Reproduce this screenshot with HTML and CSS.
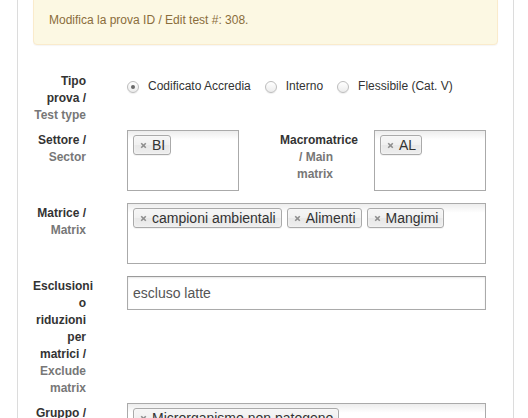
FILE: index.html
```html
<!DOCTYPE html>
<html lang="it">
<head>
<meta charset="utf-8">
<title>Modifica prova</title>
<link rel="stylesheet" href="styles.css">
</head>
<body>
<div class="panel">
  <div class="alert">Modifica la prova ID / Edit test #: 308.</div>

  <div class="form-group">
    <div class="label">Tipo prova / <span class="en">Test type</span></div>
    <div class="radios span-all">
      <label class="radio-opt"><span class="radio checked"></span>Codificato Accredia</label>
      <label class="radio-opt"><span class="radio"></span>Interno</label>
      <label class="radio-opt"><span class="radio"></span>Flessibile (Cat. V)</label>
    </div>
  </div>

  <div class="form-group">
    <div class="label">Settore / <span class="en">Sector</span></div>
    <div class="choices">
      <span class="tag"><svg viewBox="0 0 7 7"><path d="M1.2 1.2L5.8 5.8M5.8 1.2L1.2 5.8"/></svg>BI</span>
    </div>
    <div class="label">Macromatrice <span class="en">/ Main matrix</span></div>
    <div class="choices">
      <span class="tag"><svg viewBox="0 0 7 7"><path d="M1.2 1.2L5.8 5.8M5.8 1.2L1.2 5.8"/></svg>AL</span>
    </div>
  </div>

  <div class="form-group">
    <div class="label">Matrice / <span class="en">Matrix</span></div>
    <div class="choices span-all">
      <span class="tag"><svg viewBox="0 0 7 7"><path d="M1.2 1.2L5.8 5.8M5.8 1.2L1.2 5.8"/></svg>campioni ambientali</span>
      <span class="tag"><svg viewBox="0 0 7 7"><path d="M1.2 1.2L5.8 5.8M5.8 1.2L1.2 5.8"/></svg>Alimenti</span>
      <span class="tag"><svg viewBox="0 0 7 7"><path d="M1.2 1.2L5.8 5.8M5.8 1.2L1.2 5.8"/></svg>Mangimi</span>
    </div>
  </div>

  <div class="form-group">
    <div class="label">Esclusioni o riduzioni per matrici / <span class="en">Exclude matrix</span></div>
    <input class="input span-all" type="text" value="escluso latte">
  </div>

  <div class="form-group">
    <div class="label">Gruppo / <span class="en">Group</span></div>
    <div class="choices span-all">
      <span class="tag"><svg viewBox="0 0 7 7"><path d="M1.2 1.2L5.8 5.8M5.8 1.2L1.2 5.8"/></svg>Microrganismo non patogeno</span>
    </div>
  </div>
</div>
</body>
</html>
```

FILE: styles.css
```css
html, body {
  margin: 0;
  padding: 0;
  background: #fff;
}

body {
  font-family: "Liberation Sans", Arial, sans-serif;
  font-size: 12px;
  line-height: 17px;
  color: #333;
  overflow: hidden;
}

.panel {
  margin-left: 17px;
  width: 465px;
  padding: 0 15px;
  min-height: 440px;
  border-left: 1px solid #dcdcdc;
  border-right: 1px solid #dcdcdc;
}

.alert {
  margin: -4px 0 26px;
  padding: 15px;
  border: 1px solid #faebcc;
  border-radius: 4px;
  background: #fcf8e3;
  color: #8a6d3b;
  box-shadow: 0 1px 1px rgba(0, 0, 0, 0.04);
}

.form-group {
  display: grid;
  grid-template-columns: 53px 112px 53px 112px;
  column-gap: 41px;
  align-items: start;
  margin-bottom: 6px;
}

.label {
  font-weight: bold;
  text-align: right;
  padding-top: 2px;
}

.label .en {
  color: #777;
}

.span-all {
  grid-column: 2 / -1;
}

.radios {
  display: flex;
  gap: 14px;
  padding-top: 7px;
}

.radio-opt {
  display: flex;
  align-items: center;
  white-space: nowrap;
}

.radio {
  width: 12px;
  height: 12px;
  box-sizing: border-box;
  border-radius: 50%;
  border: 1px solid #bdbdbd;
  background: linear-gradient(#ffffff, #ececec);
  box-shadow: 0 1px 1px rgba(0, 0, 0, 0.07);
  margin-right: 9px;
  display: flex;
  align-items: center;
  justify-content: center;
}

.radio.checked::after {
  content: "";
  width: 4px;
  height: 4px;
  border-radius: 50%;
  background: #6a6a6a;
}

.choices {
  height: 61px;
  box-sizing: border-box;
  border: 1px solid #aaa;
  background: linear-gradient(#eeeeee 1%, #ffffff 15%);
  display: flex;
  flex-wrap: wrap;
  align-content: flex-start;
  gap: 5px;
  padding: 4px 5px;
  margin-bottom: 6px;
}

.tag {
  display: inline-flex;
  align-items: center;
  height: 20px;
  box-sizing: border-box;
  padding: 0 5px 0 6px;
  border: 1px solid #aaa;
  border-radius: 3px;
  background: linear-gradient(#f4f4f4 20%, #f0f0f0 50%, #e8e8e8 52%, #eeeeee 100%);
  box-shadow: 0 0 2px #fff inset, 0 1px 0 rgba(0, 0, 0, 0.05);
  font-size: 14px;
  line-height: 13px;
  color: #333;
  white-space: nowrap;
}

.tag svg {
  width: 7px;
  height: 7px;
  margin-right: 5px;
  flex: none;
}

.tag svg path {
  stroke: #8e8e8e;
  stroke-width: 1.6;
  fill: none;
}

.input {
  height: 34px;
  box-sizing: border-box;
  border: 1px solid #aaa;
  border-top-color: #9a9a9a;
  padding: 0 5px;
  margin: 0 0 6px;
  font-family: "Liberation Sans", Arial, sans-serif;
  font-size: 14px;
  color: #555;
  background: #fff;
  box-shadow: inset 0 1px 2px rgba(0, 0, 0, 0.1);
  outline: none;
  width: 100%;
}
```
